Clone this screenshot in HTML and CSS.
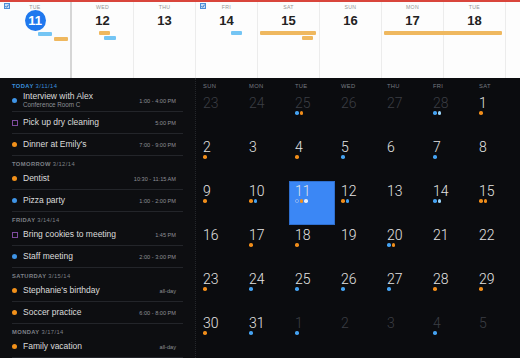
FILE: index.html
```html
<!DOCTYPE html>
<html lang="en">
<head>
  <meta charset="UTF-8">
  <meta name="viewport" content="width=device-width, initial-scale=1.0">
  <title>Calendar</title>
  <link rel="stylesheet" href="styles.css">
</head>
<body>

  <div class="week-strip">
    <div class="day first">
      <svg class="check" viewBox="0 0 6 6"><rect x="0.5" y="0.5" width="5" height="5" fill="#c7ddf5" stroke="#4c8fd8"/><path d="M1.4 3.1 L2.6 4.3 L4.7 1.6" fill="none" stroke="#2f74c8" stroke-width="1"/></svg>
      <div class="day-name">TUE</div>
      <div class="day-num"><span class="today-circle">11</span></div>
    </div>
    <div class="day"><div class="day-name">WED</div><div class="day-num">12</div></div>
    <div class="day"><div class="day-name">THU</div><div class="day-num">13</div></div>
    <div class="day">
      <svg class="check" viewBox="0 0 6 6"><rect x="0.5" y="0.5" width="5" height="5" fill="#c7ddf5" stroke="#4c8fd8"/><path d="M1.4 3.1 L2.6 4.3 L4.7 1.6" fill="none" stroke="#2f74c8" stroke-width="1"/></svg>
      <div class="day-name">FRI</div>
      <div class="day-num">14</div>
    </div>
    <div class="day"><div class="day-name">SAT</div><div class="day-num">15</div></div>
    <div class="day"><div class="day-name">SUN</div><div class="day-num">16</div></div>
    <div class="day"><div class="day-name">MON</div><div class="day-num">17</div></div>
    <div class="day"><div class="day-name">TUE</div><div class="day-num">18</div></div>
    <div class="day"></div>

    <!-- event bars, placed by time -->
    <span class="bar blue" style="left:38px; top:30px; width:14px;"></span>
    <span class="bar orange" style="left:54px; top:35px; width:14px;"></span>
    <span class="bar orange" style="left:99px; top:29px; width:11px;"></span>
    <span class="bar blue" style="left:104px; top:34px; width:12px;"></span>
    <span class="bar blue" style="left:231px; top:29px; width:11px;"></span>
    <span class="bar orange" style="left:260px; top:29px; width:56px;"></span>
    <span class="bar orange" style="left:302px; top:34px; width:11px;"></span>
    <span class="bar orange" style="left:384px; top:29px; width:118px;"></span>
  </div>

  <div class="main">
    <div class="agenda">
      <div class="group-head today">TODAY <span>3/11/14</span></div>
      <div class="item">
        <span class="dot blue"></span>
        <div class="title-wrap">
          <div class="title">Interview with Alex</div>
          <div class="sub">Conference Room C</div>
        </div>
        <span class="time">1:00 - 4:00 PM</span>
      </div>
      <div class="item">
        <span class="task"></span>
        <div class="title">Pick up dry cleaning</div>
        <span class="time">5:00 PM</span>
      </div>
      <div class="item">
        <span class="dot orange"></span>
        <div class="title">Dinner at Emily's</div>
        <span class="time">7:00 - 9:00 PM</span>
      </div>

      <div class="group-head">TOMORROW <span>3/12/14</span></div>
      <div class="item">
        <span class="dot orange"></span>
        <div class="title">Dentist</div>
        <span class="time">10:30 - 11:15 AM</span>
      </div>
      <div class="item">
        <span class="dot blue"></span>
        <div class="title">Pizza party</div>
        <span class="time">1:00 - 2:00 PM</span>
      </div>

      <div class="group-head">FRIDAY <span>3/14/14</span></div>
      <div class="item">
        <span class="task"></span>
        <div class="title">Bring cookies to meeting</div>
        <span class="time">1:45 PM</span>
      </div>
      <div class="item">
        <span class="dot blue"></span>
        <div class="title">Staff meeting</div>
        <span class="time">2:00 - 3:00 PM</span>
      </div>

      <div class="group-head">SATURDAY <span>3/15/14</span></div>
      <div class="item">
        <span class="dot orange"></span>
        <div class="title">Stephanie's birthday</div>
        <span class="time">all-day</span>
      </div>
      <div class="item">
        <span class="dot orange"></span>
        <div class="title">Soccer practice</div>
        <span class="time">6:00 - 8:00 PM</span>
      </div>

      <div class="group-head">MONDAY <span>3/17/14</span></div>
      <div class="item">
        <span class="dot orange"></span>
        <div class="title">Family vacation</div>
        <span class="time">all-day</span>
      </div>
    </div>

    <div class="month">
      <div class="month-grid">
        <div class="wd">SUN</div><div class="wd">MON</div><div class="wd">TUE</div><div class="wd">WED</div>
        <div class="wd">THU</div><div class="wd">FRI</div><div class="wd">SAT</div>

        <div class="cell dim"><div class="num">23</div></div>
        <div class="cell dim"><div class="num">24</div></div>
        <div class="cell dim"><div class="num">25</div><div class="dots"><i class="blue"></i><i class="orange"></i></div></div>
        <div class="cell dim"><div class="num">26</div></div>
        <div class="cell dim"><div class="num">27</div></div>
        <div class="cell dim"><div class="num">28</div><div class="dots"><i class="blue"></i><i class="light"></i></div></div>
        <div class="cell"><div class="num">1</div><div class="dots"><i class="orange"></i></div></div>

        <div class="cell"><div class="num">2</div><div class="dots"><i class="orange"></i></div></div>
        <div class="cell"><div class="num">3</div></div>
        <div class="cell"><div class="num">4</div><div class="dots"><i class="orange"></i></div></div>
        <div class="cell"><div class="num">5</div><div class="dots"><i class="blue"></i></div></div>
        <div class="cell"><div class="num">6</div></div>
        <div class="cell"><div class="num">7</div><div class="dots"><i class="blue"></i></div></div>
        <div class="cell"><div class="num">8</div></div>

        <div class="cell"><div class="num">9</div><div class="dots"><i class="orange"></i></div></div>
        <div class="cell"><div class="num">10</div><div class="dots"><i class="orange"></i><i class="blue"></i></div></div>
        <div class="cell selected"><div class="num">11</div><div class="dots"><i class="ring"></i><i class="orange"></i><i class="white"></i></div></div>
        <div class="cell"><div class="num">12</div><div class="dots"><i class="orange"></i><i class="blue"></i></div></div>
        <div class="cell"><div class="num">13</div></div>
        <div class="cell"><div class="num">14</div><div class="dots"><i class="blue"></i><i class="light"></i></div></div>
        <div class="cell"><div class="num">15</div><div class="dots"><i class="orange"></i><i class="orange"></i></div></div>

        <div class="cell"><div class="num">16</div></div>
        <div class="cell"><div class="num">17</div><div class="dots"><i class="orange"></i></div></div>
        <div class="cell"><div class="num">18</div><div class="dots"><i class="orange"></i></div></div>
        <div class="cell"><div class="num">19</div></div>
        <div class="cell"><div class="num">20</div><div class="dots"><i class="blue"></i><i class="orange"></i></div></div>
        <div class="cell"><div class="num">21</div></div>
        <div class="cell"><div class="num">22</div></div>

        <div class="cell"><div class="num">23</div><div class="dots"><i class="orange"></i></div></div>
        <div class="cell"><div class="num">24</div><div class="dots"><i class="blue"></i></div></div>
        <div class="cell"><div class="num">25</div><div class="dots"><i class="blue"></i></div></div>
        <div class="cell"><div class="num">26</div><div class="dots"><i class="blue"></i></div></div>
        <div class="cell"><div class="num">27</div><div class="dots"><i class="blue"></i></div></div>
        <div class="cell"><div class="num">28</div><div class="dots"><i class="orange"></i></div></div>
        <div class="cell"><div class="num">29</div><div class="dots"><i class="orange"></i></div></div>

        <div class="cell"><div class="num">30</div><div class="dots"><i class="orange"></i></div></div>
        <div class="cell"><div class="num">31</div><div class="dots"><i class="blue"></i></div></div>
        <div class="cell dim"><div class="num">1</div><div class="dots"><i class="blue"></i></div></div>
        <div class="cell dim"><div class="num">2</div></div>
        <div class="cell dim"><div class="num">3</div></div>
        <div class="cell dim"><div class="num">4</div><div class="dots"><i class="blue"></i></div></div>
        <div class="cell dim"><div class="num">5</div></div>
      </div>
    </div>
  </div>

</body>
</html>
```

FILE: styles.css
```css
body {
  margin: 0;
  width: 520px;
  height: 358px;
  overflow: hidden;
  background: #0c0d10;
  font-family: 'Liberation Sans', Arial, sans-serif;
}

/* ---- week strip ---- */

.week-strip {
  position: relative;
  display: flex;
  height: 76px;
  border-top: 2px solid #d9453c;
  background: #fdfdfd;
  overflow: hidden;
}

.day {
  position: relative;
  flex: 0 0 61px;
  border-right: 1px solid #ececec;
  padding-top: 2px;
  text-align: center;
}

.day.first {
  flex-basis: 70px;
  border-right: 2px solid #d6d6d6;
  background: #fbfcfd;
}

.day-name {
  height: 6px;
  line-height: 6px;
  font-size: 5.2px;
  letter-spacing: 0.3px;
  color: #959595;
}

.day-num {
  height: 21px;
  line-height: 21px;
  font-size: 13px;
  font-weight: bold;
  color: #222;
}

.today-circle {
  display: inline-block;
  width: 21px;
  height: 21px;
  border-radius: 50%;
  background: #1f78ee;
  color: #fff;
}

.check {
  position: absolute;
  left: 4px;
  top: 1px;
  width: 6px;
  height: 6px;
}

.bar {
  position: absolute;
  height: 4px;
  border-radius: 1px;
}

.bar.blue { background: #74c5f4; }
.bar.orange { background: #efb85f; }

/* ---- dark part ---- */

.main {
  display: flex;
  height: 280px;
}

.agenda {
  flex: 0 0 171px;
  padding: 0 12px;
  background: #0d0e11;
}

.group-head {
  height: 12px;
  box-sizing: border-box;
  padding-top: 5px;
  line-height: 6px;
  font-size: 5.8px;
  letter-spacing: 0.4px;
  font-weight: bold;
  color: #7e8188;
}

.group-head span {
  font-weight: normal;
}

.group-head.today {
  color: #3a8edc;
}

.item {
  display: flex;
  align-items: center;
  height: 21px;
  border-bottom: 1px solid #23252a;
  padding-right: 7px;
}

.dot {
  flex: 0 0 5px;
  height: 5px;
  border-radius: 50%;
  margin-right: 6px;
}

.dot.blue { background: #3f94e6; }
.dot.orange { background: #f1901a; }

.task {
  flex: 0 0 4px;
  height: 4px;
  border: 1px solid #7d4b9d;
  margin-right: 5px;
}

.title-wrap {
  align-self: flex-start;
  padding-top: 2px;
}

.title {
  font-size: 8.5px;
  line-height: 9px;
  color: #dcdcdc;
  white-space: nowrap;
}

.sub {
  font-size: 6.3px;
  line-height: 8px;
  color: #8d9096;
}

.time {
  margin-left: auto;
  font-size: 5.6px;
  color: #8d9096;
  white-space: nowrap;
}

/* ---- month ---- */

.month {
  flex: 1;
  border-left: 1px dotted #25272b;
  padding-left: 1px;
  background: #0b0c0f;
}

.month-grid {
  display: grid;
  grid-template-columns: repeat(7, 46px);
  grid-template-rows: 15px repeat(6, 44px);
}

.wd {
  padding: 5px 0 0 6px;
  font-size: 5.8px;
  letter-spacing: 0.3px;
  color: #777a81;
}

.cell {
  padding: 2px 0 0 6px;
}

.num {
  font-family: Roboto, 'Liberation Sans', sans-serif;
  font-weight: 300;
  font-size: 14px;
  line-height: 16px;
  color: #e4e4e4;
}

.cell.dim .num {
  color: #3b3e44;
}

.cell.selected {
  background: #3b87f5;
  box-shadow: inset 0 0 0 1px #2f6fce;
}

.dots {
  display: flex;
  gap: 1px;
}

.dots i {
  width: 3.5px;
  height: 3.5px;
  border-radius: 50%;
}

.dots .blue { background: #45a2f1; }
.dots .orange { background: #f08d1a; }
.dots .light { background: #9ad3f7; }
.dots .white { background: #e6eefc; }
.dots .ring { box-sizing: border-box; border: 1px solid #8fb6f0; }
```
